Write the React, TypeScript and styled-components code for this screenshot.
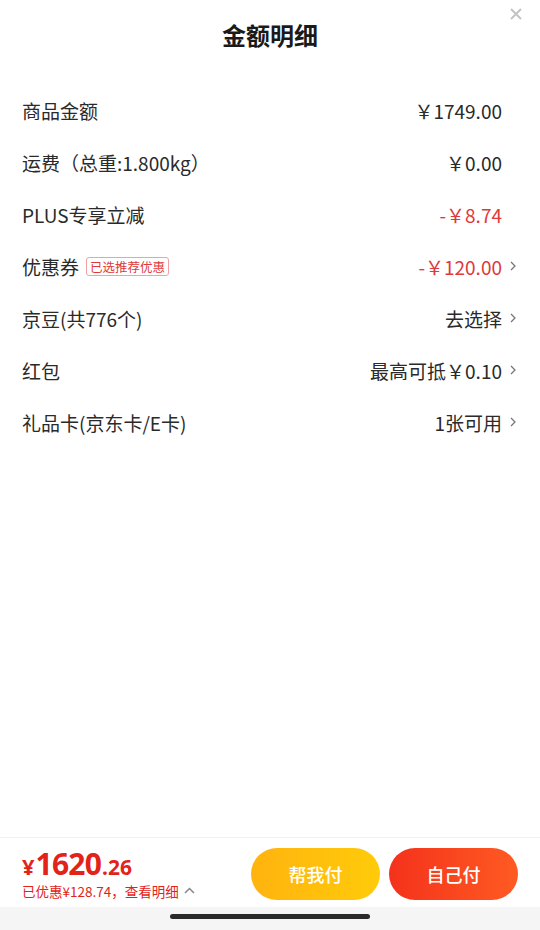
import React from "react";
import styled, { createGlobalStyle } from "styled-components";

const Global = createGlobalStyle`
  html, body { margin: 0; padding: 0; background: #fff; }
  body { font-family: "Noto Sans CJK SC", "Noto Sans", sans-serif; }
  * { box-sizing: border-box; }
`;

const Page = styled.div`
  width: 540px;
  height: 930px;
  display: flex;
  flex-direction: column;
  background: #fff;
  position: relative;
  overflow: hidden;
`;

const Header = styled.div`
  height: 70px;
  display: flex;
  align-items: center;
  justify-content: center;
  position: relative;
`;

const Title = styled.h1`
  margin: 0;
  font-size: 24px;
  font-weight: 700;
  color: #1a1a1a;
  line-height: 1;
`;

const Close = styled.button`
  position: absolute;
  top: 7px;
  right: 17px;
  width: 14px;
  height: 14px;
  padding: 0;
  border: 0;
  background: none;
  display: flex;
  align-items: center;
  justify-content: center;
`;

const List = styled.div`
  display: flex;
  flex-direction: column;
  padding: 14px 24px 0 22px;
`;

const Row = styled.div`
  height: 52px;
  display: flex;
  align-items: center;
  justify-content: space-between;
`;

const Label = styled.div`
  display: flex;
  align-items: center;
  gap: 7px;
  font-size: 19px;
  color: #2a2a2a;
  line-height: 1;
`;

const Tag = styled.span`
  font-size: 12.5px;
  color: #e0393b;
  border: 1px solid #efa2a2;
  border-radius: 3px;
  padding: 2px 3px;
  line-height: 13px;
  margin-top: 1px;
`;

const Right = styled.div`
  display: flex;
  align-items: center;
`;

const Value = styled.span<{ $red?: boolean }>`
  font-size: 19px;
  color: ${(p) => (p.$red ? "#e0393b" : "#2a2a2a")};
  line-height: 1;
`;

const ChevronSlot = styled.span`
  width: 14px;
  display: flex;
  justify-content: flex-end;
  align-items: center;
`;

const Spacer = styled.div`
  flex: 1;
`;

const Bar = styled.div`
  height: 70px;
  border-top: 1px solid #f2f2f2;
  padding: 0 22px;
  display: flex;
  align-items: center;
  justify-content: space-between;
`;

const PriceBlock = styled.div`
  display: flex;
  flex-direction: column;
  gap: 3px;
  margin-top: 3px;
`;

const Price = styled.div`
  color: #e2231a;
  font-family: "Noto Sans", "Noto Sans CJK SC", sans-serif;
  font-weight: 700;
  line-height: 1;
  display: flex;
  align-items: baseline;
`;

const PriceYen = styled.span`
  font-size: 22px;
  margin-right: 1px;
`;
const PriceInt = styled.span`
  font-size: 30px;
  letter-spacing: -0.8px;
`;
const PriceDec = styled.span`
  font-size: 21px;
  margin-left: 1px;
`;

const Saved = styled.div`
  font-size: 13.5px;
  color: #e2231a;
  display: flex;
  align-items: center;
  gap: 5px;
  line-height: 18px;
`;

const Buttons = styled.div`
  display: flex;
  gap: 9px;
  margin-top: 2px;
`;

const PayButton = styled.button<{ $variant: "yellow" | "red" }>`
  width: 129px;
  height: 52px;
  border: 0;
  border-radius: 26px;
  color: #fff;
  font-family: "Noto Sans CJK SC", sans-serif;
  font-size: 18px;
  font-weight: 500;
  background: ${(p) =>
    p.$variant === "yellow"
      ? "linear-gradient(90deg, #ffb30f, #ffcb0a)"
      : "linear-gradient(90deg, #f4321c, #ff5a22)"};
`;

const HomeStrip = styled.div`
  height: 23px;
  background: #f5f5f5;
  display: flex;
  justify-content: center;
  padding-top: 7px;
`;

const Indicator = styled.div`
  width: 200px;
  height: 5px;
  border-radius: 3px;
  background: #2a2a2a;
`;

const Chevron = () => (
  <svg width="6" height="10" viewBox="0 0 6 10">
    <path d="M1 1l4 4-4 4" fill="none" stroke="#777" strokeWidth="1.3" />
  </svg>
);

const rows: { label: string; tag?: string; value: string; red?: boolean; arrow?: boolean }[] = [
  { label: "商品金额", value: "￥1749.00" },
  { label: "运费（总重:1.800kg）", value: "￥0.00" },
  { label: "PLUS专享立减", value: "-￥8.74", red: true },
  { label: "优惠券", tag: "已选推荐优惠", value: "-￥120.00", red: true, arrow: true },
  { label: "京豆(共776个)", value: "去选择", arrow: true },
  { label: "红包", value: "最高可抵￥0.10", arrow: true },
  { label: "礼品卡(京东卡/E卡)", value: "1张可用", arrow: true },
];

export default function App() {
  return (
    <Page>
      <Global />
      <Header>
        <Title>金额明细</Title>
        <Close aria-label="关闭">
          <svg width="12" height="12" viewBox="0 0 12 12">
            <path d="M1 1l10 10M11 1L1 11" stroke="#c4c4c4" strokeWidth="2" />
          </svg>
        </Close>
      </Header>
      <List>
        {rows.map((r) => (
          <Row key={r.label}>
            <Label>
              {r.label}
              {r.tag && <Tag>{r.tag}</Tag>}
            </Label>
            <Right>
              <Value $red={r.red}>{r.value}</Value>
              <ChevronSlot>{r.arrow && <Chevron />}</ChevronSlot>
            </Right>
          </Row>
        ))}
      </List>
      <Spacer />
      <Bar>
        <PriceBlock>
          <Price>
            <PriceYen>¥</PriceYen>
            <PriceInt>1620</PriceInt>
            <PriceDec>.26</PriceDec>
          </Price>
          <Saved>
            已优惠¥128.74，查看明细
            <svg width="11" height="7" viewBox="0 0 11 7">
              <path d="M1 6l4.5-4.5L10 6" fill="none" stroke="#888" strokeWidth="1.5" />
            </svg>
          </Saved>
        </PriceBlock>
        <Buttons>
          <PayButton $variant="yellow">帮我付</PayButton>
          <PayButton $variant="red">自己付</PayButton>
        </Buttons>
      </Bar>
      <HomeStrip>
        <Indicator />
      </HomeStrip>
    </Page>
  );
}
